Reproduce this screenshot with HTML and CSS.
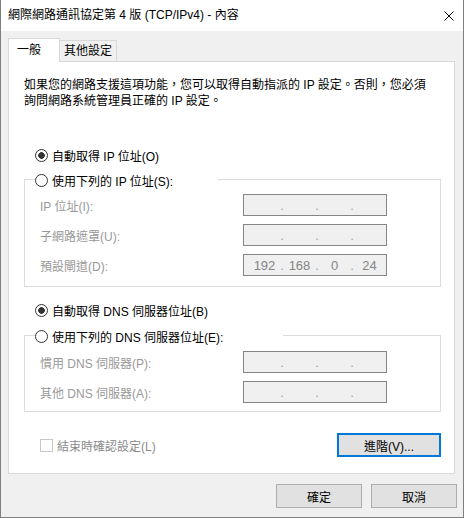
FILE: index.html
```html
<!DOCTYPE html>
<html lang="zh-Hant">
<head>
    <meta charset="UTF-8">
    <meta name="viewport" content="width=device-width, initial-scale=1.0">
    <title>網際網路通訊協定第 4 版 (TCP/IPv4) - 內容</title>
    <link rel="stylesheet" href="styles.css">
</head>
<body>

    <div class="window">
        <!-- Title bar -->
        <div class="titlebar">
            <span class="title">網際網路通訊協定第 4 版 (TCP/IPv4) - 內容</span>
            <svg class="close" width="10" height="10" viewBox="0 0 10 10">
                <path d="M0.5 0.5L9.5 9.5M9.5 0.5L0.5 9.5" stroke="#000" stroke-width="1" fill="none"/>
            </svg>
        </div>

        <div class="content">
            <div class="tabs">
                <div class="tab active">一般</div>
                <div class="tab">其他設定</div>
            </div>

            <div class="panel">
                <p class="desc">如果您的網路支援這項功能，您可以取得自動指派的 IP 設定。否則，您必須<br>詢問網路系統管理員正確的 IP 設定。</p>

                <div class="radio-row first"><span class="radio checked"></span>自動取得 IP 位址(O)</div>

                <div class="group">
                    <div class="group-title ip-title"><span class="radio"></span>使用下列的 IP 位址(S):</div>
                    <div class="field first-field">
                        <span class="label">IP 位址(I):</span>
                        <div class="ip-box"><span class="seg"></span><span class="dot">.</span><span class="seg"></span><span class="dot">.</span><span class="seg"></span><span class="dot">.</span><span class="seg"></span></div>
                    </div>
                    <div class="field">
                        <span class="label">子網路遮罩(U):</span>
                        <div class="ip-box"><span class="seg"></span><span class="dot">.</span><span class="seg"></span><span class="dot">.</span><span class="seg"></span><span class="dot">.</span><span class="seg"></span></div>
                    </div>
                    <div class="field">
                        <span class="label">預設閘道(D):</span>
                        <div class="ip-box"><span class="seg">192</span><span class="dot">.</span><span class="seg">168</span><span class="dot">.</span><span class="seg">0</span><span class="dot">.</span><span class="seg">24</span></div>
                    </div>
                </div>

                <div class="radio-row dns-auto"><span class="radio checked"></span>自動取得 DNS 伺服器位址(B)</div>

                <div class="group dns-group">
                    <div class="group-title dns-title"><span class="radio"></span>使用下列的 DNS 伺服器位址(E):</div>
                    <div class="field first-field dns-first">
                        <span class="label">慣用 DNS 伺服器(P):</span>
                        <div class="ip-box"><span class="seg"></span><span class="dot">.</span><span class="seg"></span><span class="dot">.</span><span class="seg"></span><span class="dot">.</span><span class="seg"></span></div>
                    </div>
                    <div class="field">
                        <span class="label">其他 DNS 伺服器(A):</span>
                        <div class="ip-box"><span class="seg"></span><span class="dot">.</span><span class="seg"></span><span class="dot">.</span><span class="seg"></span><span class="dot">.</span><span class="seg"></span></div>
                    </div>
                </div>

                <div class="bottom-row">
                    <label class="check"><span class="checkbox"></span>結束時確認設定(L)</label>
                    <button class="btn advanced">進階(V)...</button>
                </div>
            </div>

            <div class="footer">
                <button class="btn">確定</button>
                <button class="btn">取消</button>
            </div>
        </div>
    </div>

</body>
</html>
```

FILE: styles.css
```css
body {
    margin: 0;
    font-family: "Liberation Sans", "Noto Sans CJK TC", "Microsoft JhengHei", sans-serif;
    font-size: 12px;
    color: #000;
    background: #fff;
}
.window {
    width: 464px;
    height: 518px;
    box-sizing: border-box;
    border: 1px solid #7f7f7f;
    border-top: none;
    display: flex;
    flex-direction: column;
}
/* Title bar */
.titlebar {
    height: 31px;
    background: #fff;
    display: flex;
    align-items: center;
    justify-content: space-between;
    padding: 0 9px 0 7px;
}
.title {
    line-height: 31px;
}
.content {
    flex: 1;
    background: #f0f0f0;
    padding: 7px 8px 0 7px;
}
/* Tabs */
.tabs {
    display: flex;
    align-items: flex-end;
}
.tab {
    box-sizing: border-box;
    height: 21px;
    width: 57px;
    line-height: 20px;
    text-align: center;
    border: 1px solid #d9d9d9;
    border-bottom: none;
    border-left: none;
    background: #f0f0f0;
}
.tab.active {
    position: relative;
    z-index: 1;
    width: 52px;
    height: 24px;
    line-height: 22px;
    text-align: left;
    padding-left: 8px;
    margin-bottom: -1px;
    border-left: 1px solid #d9d9d9;
    background: #fff;
}
.panel {
    box-sizing: border-box;
    width: 447px;
    background: #fff;
    border: 1px solid #d9d9d9;
    padding: 15px 13px 16px 15px;
}
.desc {
    margin: 0;
    line-height: 16px;
}
/* Radios */
.radio-row {
    display: flex;
    align-items: center;
    height: 18px;
    padding-left: 11px;
}
.radio-row.first {
    margin-top: 37px;
}
.radio-row.dns-auto {
    margin-top: 14px;
}
.radio {
    box-sizing: border-box;
    width: 13px;
    height: 13px;
    border: 1px solid #333;
    border-radius: 50%;
    margin-right: 4px;
    background: #fff;
}
.radio.checked {
    background: radial-gradient(circle, #333 0, #333 3px, #fff 3.6px);
}
/* Group boxes */
.group {
    margin-top: 15px;
    border: 1px solid #dcdcdc;
    padding: 0 0 10px 0;
}
.dns-group {
    margin-top: 16px;
    padding-bottom: 8px;
}
.group-title {
    display: flex;
    align-items: center;
    height: 18px;
    margin-top: -9px;
    margin-left: 10px;
    background: #fff;
}
.ip-title {
    width: 183px;
}
.dns-title {
    width: 248px;
}
.field {
    display: flex;
    align-items: center;
    height: 22px;
    margin-top: 8px;
    padding-left: 15px;
}
.field.first-field {
    margin-top: 5px;
}
.field.dns-first {
    margin-top: 6px;
}
.label {
    width: 203px;
    color: #999;
}
.ip-box {
    box-sizing: border-box;
    width: 144px;
    height: 22px;
    border: 1px solid #858585;
    background: #f0f0f0;
    display: flex;
    align-items: center;
    padding-left: 5px;
    color: #858585;
    font-family: "Liberation Sans", Arial, sans-serif;
    font-size: 13px;
}
.seg {
    width: 31px;
    text-align: center;
}
.dot {
    width: 4px;
    text-align: center;
    color: #a0a0a0;
}
/* Bottom row */
.bottom-row {
    display: flex;
    align-items: center;
    justify-content: space-between;
    margin-top: 21px;
    padding-left: 16px;
}
.check {
    display: flex;
    align-items: center;
    color: #8a8a8a;
}
.checkbox {
    box-sizing: border-box;
    width: 13px;
    height: 13px;
    border: 1px solid #c8c8c8;
    background: #fff;
    margin-right: 4px;
}
.btn {
    box-sizing: border-box;
    width: 86px;
    height: 24px;
    padding: 0;
    background: #e1e1e1;
    border: 1px solid #adadad;
    font-family: inherit;
    font-size: 12px;
    color: #000;
}
.btn.advanced {
    width: 104px;
    border: 2px solid #0078d7;
}
.footer {
    display: flex;
    justify-content: flex-end;
    gap: 9px;
    margin-top: 10px;
    margin-right: -2px;
}
```
